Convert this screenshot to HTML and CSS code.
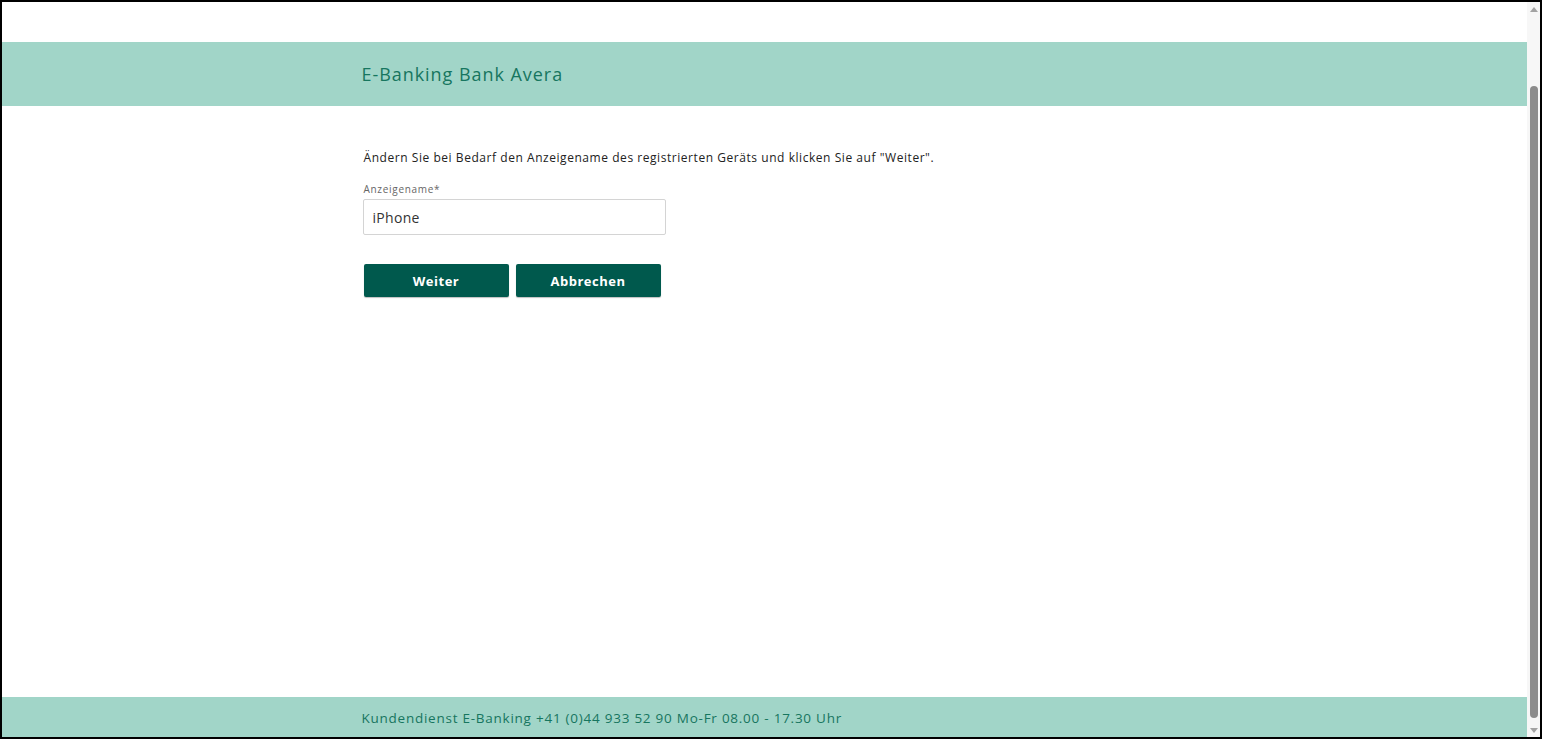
FILE: index.html
```html
<!DOCTYPE html>
<html lang="de">
<head>
<meta charset="utf-8">
<title>E-Banking Bank Avera</title>
<link rel="stylesheet" href="styles.css">
</head>
<body>
<div class="frame">
  <div class="page">
    <header class="header">
      <div class="container">
        <h1 class="title">E-Banking Bank Avera</h1>
      </div>
    </header>
    <main class="content">
      <div class="container">
        <p class="intro">Ändern Sie bei Bedarf den Anzeigename des registrierten Geräts und klicken Sie auf "Weiter".</p>
        <label class="label" for="name">Anzeigename*</label>
        <input class="input" id="name" type="text" value="iPhone">
        <div class="actions">
          <button class="btn" type="button">Weiter</button>
          <button class="btn" type="button">Abbrechen</button>
        </div>
      </div>
    </main>
    <footer class="footer">
      <div class="container">
        <span class="footer-text">Kundendienst E-Banking +41 (0)44 933 52 90 Mo-Fr 08.00 - 17.30 Uhr</span>
      </div>
    </footer>
  </div>
  <div class="scrollbar">
    <div class="arrow arrow-up"></div>
    <div class="track"><div class="thumb"></div></div>
    <div class="arrow arrow-down"></div>
  </div>
</div>
</body>
</html>
```

FILE: styles.css
```css
* { box-sizing: border-box; }
html, body { margin: 0; padding: 0; background: #fff; }
body {
  font-family: "Open Sans", "Liberation Sans", sans-serif;
  width: 1543px;
  height: 741px;
  overflow: hidden;
}
.frame {
  width: 1542px;
  height: 739px;
  border: 2px solid #000;
  display: flex;
  background: #fff;
}
.page {
  flex: 1;
  display: flex;
  flex-direction: column;
  padding-top: 40px;
}
.container {
  width: 806px;
  margin: 0 auto;
}
.header {
  height: 64px;
  background: #a1d5c8;
  display: flex;
  align-items: center;
}
.title {
  margin: 0;
  font-size: 18px;
  font-weight: 400;
  color: #17765f;
  letter-spacing: 0.95px;
}
.content {
  flex: 1;
  padding-top: 44px;
}
.intro {
  margin: 0 0 0 2px;
  font-size: 12px;
  line-height: 16px;
  color: #222;
  letter-spacing: 0.55px;
}
.label {
  display: block;
  margin: 16px 0 0 2px;
  font-size: 10px;
  line-height: 14px;
  color: #666;
  letter-spacing: 0.7px;
}
.input {
  display: block;
  margin: 3px 0 0 1px;
  width: 303px;
  height: 36px;
  border: 1px solid #d4d4d4;
  border-radius: 2px;
  padding: 0 9px;
  font-family: inherit;
  font-size: 14px;
  color: #333;
  background: #fff;
  letter-spacing: 0.3px;
}
.actions {
  display: flex;
  gap: 7px;
  margin: 29px 0 0 2px;
}
.btn {
  width: 145px;
  height: 33px;
  border: 0;
  border-radius: 2px;
  background: #00594d;
  color: #fff;
  font-family: inherit;
  font-size: 13px;
  font-weight: 700;
  letter-spacing: 0.5px;
  box-shadow: 0 1px 1px rgba(0,0,0,0.25);
}
.footer {
  height: 40px;
  background: #a1d5c8;
  display: flex;
  align-items: center;
}
.footer-text {
  font-size: 13.5px;
  color: #17765f;
  letter-spacing: 0.75px;
}
.scrollbar {
  width: 13px;
  display: flex;
  flex-direction: column;
  align-items: center;
  background: #f7f7f7;
}
.arrow {
  width: 0;
  height: 0;
  border-left: 4px solid transparent;
  border-right: 4px solid transparent;
}
.arrow-up {
  margin-top: 5px;
  border-bottom: 5px solid #a3a3a3;
}
.arrow-down {
  margin-bottom: 4px;
  border-top: 5px solid #a3a3a3;
}
.track {
  flex: 1;
  width: 100%;
  display: flex;
  justify-content: center;
  padding: 74px 0 10px;
}
.thumb {
  width: 8px;
  height: 100%;
  background: #8c8c8c;
  border-radius: 4px;
}
```
